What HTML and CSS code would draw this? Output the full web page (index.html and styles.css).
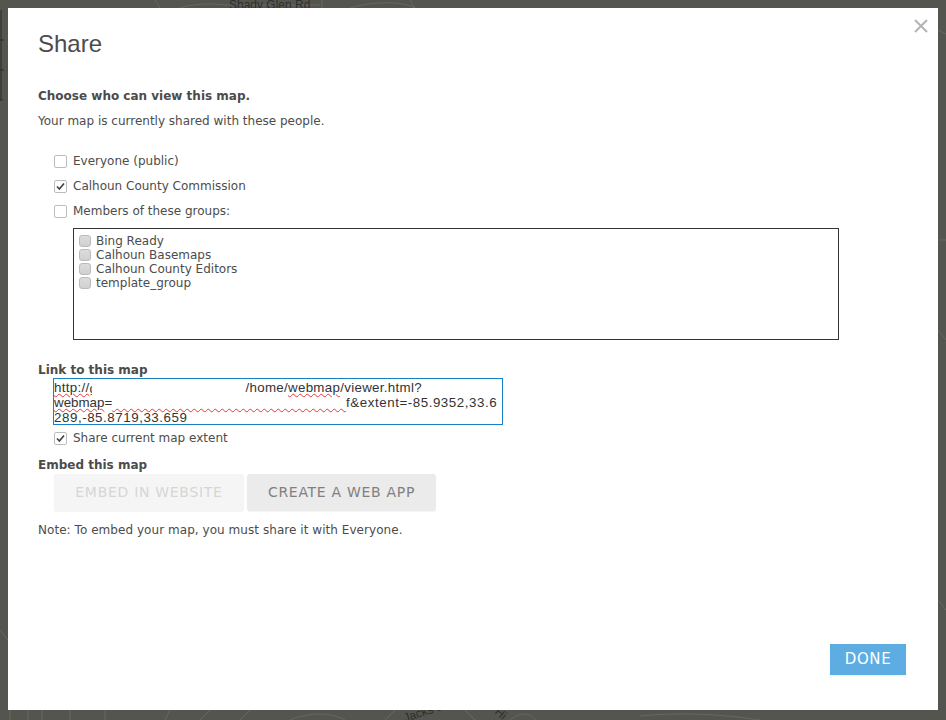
FILE: index.html
```html
<!DOCTYPE html>
<html lang="en">
<head>
<meta charset="utf-8">
<title>Share</title>
<link rel="stylesheet" href="styles.css">
</head>
<body>
<svg class="map" width="946" height="720" viewBox="0 0 946 720" aria-hidden="true">
  <g fill="none" stroke="#68685f" stroke-width="1">
    <path d="M155 0L160 8M180 8C190 4 210 3 225 5H320M322 0V8M350 8C370 2 400 0 415 8M410 0L415 8"/>
    <path d="M10 710V720M28 710V720M42 710V720M70 710V720M105 710V720M170 710L165 720M210 710L200 720M250 710L240 720M290 720C310 712 330 712 345 720M395 710L385 720M465 710L475 720M510 720C520 712 530 712 535 720M640 716C680 712 720 714 760 720"/>
    <path d="M938 30L946 34M938 240H946M938 330L946 340M938 600L946 610M0 630L8 640"/>
  </g>
  <path d="M1 10V100M0 40H4M0 70H4M0 100H3" fill="none" stroke="#2b2b28"/>
  <g fill="#2f2f2b" font-family="Liberation Sans, sans-serif" font-size="12">
    <text x="229" y="9">Shady Glen Rd</text>
    <text x="405" y="722" transform="rotate(-18 405 722)">Jacks Dr</text>
    <text x="494" y="713" transform="rotate(40 494 713)">Hi</text>
  </g>
</svg>
<main class="modal">
  <button class="close" type="button" aria-label="Close">
    <svg width="14" height="14" viewBox="0 0 14 14"><path d="M1 1L13 13M13 1L1 13" stroke="#b4b4b4" stroke-width="2" fill="none"/></svg>
  </button>
  <h1 class="title">Share</h1>
  <h2 class="heading choose">Choose who can view this map.</h2>
  <p class="intro">Your map is currently shared with these people.</p>
  <ul class="options">
    <li class="option"><span class="check"></span>Everyone (public)</li>
    <li class="option"><span class="check"><svg width="9" height="9" viewBox="0 0 9 9"><path d="M1 4.5L3.4 7L8 1.5" fill="none" stroke="#444" stroke-width="1.7"/></svg></span>Calhoun County Commission</li>
    <li class="option"><span class="check"></span>Members of these groups:</li>
  </ul>
  <ul class="groups">
    <li class="group"><span class="gcheck"></span>Bing Ready</li>
    <li class="group"><span class="gcheck"></span>Calhoun Basemaps</li>
    <li class="group"><span class="gcheck"></span>Calhoun County Editors</li>
    <li class="group"><span class="gcheck"></span>template_group</li>
  </ul>
  <h2 class="heading link">Link to this map</h2>
  <div class="url"><span class="line-a"><span class="sq">http://</span><span class="sliver">g</span><span class="gap-a"></span>/home/<span class="sq">webmap</span>/viewer.html?</span><br><span class="line-b"><span class="sq">webmap</span>=</span><span class="sq blank">&nbsp;&nbsp;&nbsp;&nbsp;&nbsp;&nbsp;&nbsp;&nbsp;&nbsp;&nbsp;&nbsp;&nbsp;&nbsp;&nbsp;&nbsp;&nbsp;&nbsp;&nbsp;&nbsp;&nbsp;&nbsp;&nbsp;&nbsp;&nbsp;&nbsp;&nbsp;&nbsp;&nbsp;&nbsp;&nbsp;&nbsp;&nbsp;&nbsp;&nbsp;&nbsp;&nbsp;&nbsp;&nbsp;&nbsp;&nbsp;&nbsp;&nbsp;&nbsp;&nbsp;&nbsp;&nbsp;&nbsp;&nbsp;&nbsp;&nbsp;&nbsp;&nbsp;&nbsp;&nbsp;&nbsp;</span>f&amp;extent=-85.9352,33.6<br>289,-85.8719,33.659</div>
  <div class="option extent"><span class="check"><svg width="9" height="9" viewBox="0 0 9 9"><path d="M1 4.5L3.4 7L8 1.5" fill="none" stroke="#444" stroke-width="1.7"/></svg></span>Share current map extent</div>
  <h2 class="heading embed">Embed this map</h2>
  <div class="actions">
    <button class="btn disabled" type="button">EMBED IN WEBSITE</button>
    <button class="btn" type="button">CREATE A WEB APP</button>
  </div>
  <p class="note">Note: To embed your map, you must share it with Everyone.</p>
  <div class="footer"><button class="done" type="button">DONE</button></div>
</main>
</body>
</html>
```
FILE: styles.css
```css
* { box-sizing: border-box; }
html, body { margin: 0; height: 720px; overflow: hidden; }
body {
  background: #55554f;
  padding: 8px;
  color: #4c4c4c;
  font-family: "DejaVu Sans", Verdana, sans-serif;
  font-size: 12px;
}
.map { position: absolute; left: 0; top: 0; }
.modal {
  position: relative;
  width: 930px;
  height: 702px;
  background: #fff;
  padding: 20px 30px 0;
  display: flex;
  flex-direction: column;
}
.close {
  position: absolute;
  right: 10px;
  top: 11px;
  border: 0;
  padding: 0;
  background: none;
  line-height: 0;
}
.title {
  margin: 0;
  font: 400 24px/32px "Liberation Sans", Arial, sans-serif;
  color: #4c4c4c;
}
.heading {
  margin: 0;
  font-size: 12px;
  line-height: 16px;
  font-weight: 700;
  color: #4c4c4c;
}
.choose { margin-top: 28px; }
.intro { margin: 9px 0 0; line-height: 16px; }
.options { list-style: none; margin: 24px 0 0 16px; padding: 0; display: flex; flex-direction: column; gap: 9px; }
.option { display: flex; align-items: center; height: 16px; line-height: 16px; }
.check {
  width: 13px;
  height: 13px;
  margin-right: 6px;
  border: 1px solid #bcbcbc;
  border-radius: 2px;
  background: #fff;
  display: flex;
  align-items: center;
  justify-content: center;
}
.groups {
  list-style: none;
  margin: 9px 0 0 35px;
  padding: 5px 5px 0;
  width: 766px;
  height: 112px;
  border: 1px solid #333;
}
.group { display: flex; align-items: center; height: 14px; line-height: 14px; }
.gcheck {
  width: 12px;
  height: 12px;
  margin-right: 5px;
  border: 1px solid #bbb;
  border-radius: 3px;
  background: linear-gradient(#dcdcdc, #d0d0d0);
}
.link { margin-top: 23px; line-height: 14px; }
.url {
  margin: 1px 0 0 15px;
  width: 450px;
  height: 47px;
  border: 1px solid #1a7fc4;
  padding: 1px 0 0;
  color: #333;
  font: 13.33px/15px "Liberation Sans", Arial, sans-serif;
  letter-spacing: 0.55px;
  white-space: nowrap;
  overflow: hidden;
}
.line-a { letter-spacing: 0.3px; }
.line-b { letter-spacing: 0; }
.sq { text-decoration: underline wavy #e23b3b 1px; text-underline-offset: 1px; }
.sliver { display: inline-block; width: 3px; height: 14px; overflow: hidden; vertical-align: bottom; }
.gap-a { display: inline-block; width: 153px; }
.extent { margin: 5px 0 0 16px; }
.embed { margin-top: 11px; }
.actions { display: flex; gap: 3px; margin: 1px 0 0 16px; }
.btn {
  height: 37px;
  width: 189px;
  border: 0;
  border-radius: 3px;
  background: #ebebeb;
  color: #808080;
  font: 14px/37px "DejaVu Sans", Verdana, sans-serif;
  letter-spacing: 0.7px;
  padding: 0;
  box-shadow: 0 1px 1px rgba(0, 0, 0, 0.05);
}
.btn.disabled { width: 190px; background: #f5f5f5; color: #d6d6d6; }
.note { margin: 11px 0 0; line-height: 16px; letter-spacing: 0.05px; }
.footer { margin-top: auto; display: flex; justify-content: flex-end; padding: 0 2px 35px 0; }
.done {
  width: 76px;
  height: 31px;
  border: 0;
  background: #5dade2;
  color: #fff;
  font: 15px/31px "DejaVu Sans", Verdana, sans-serif;
  letter-spacing: 0.6px;
  padding: 0;
  box-shadow: 0 1px 2px rgba(0, 0, 0, 0.08);
}
```
